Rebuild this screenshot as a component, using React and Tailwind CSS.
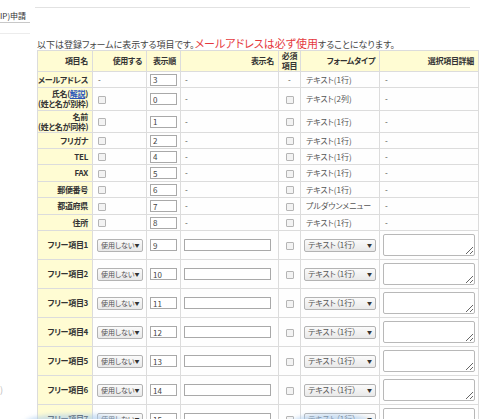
import React from 'react';

const font = "font-['Noto_Sans_CJK_JP','Noto_Sans',sans-serif] [font-feature-settings:'palt']";

const fixedRows = [
	{ label: 'メールアドレス', use: false, order: '3', req: false, type: 'テキスト(1行)', h: 'h-[16px]' },
	{
		label: (
			<>
				氏名(<span className="text-[#2a55b8] underline">解説</span>)
				<br />
				(姓と名が別枠)
			</>
		),
		use: true,
		order: '0',
		req: true,
		type: 'テキスト(2列)',
		h: 'h-[23px]'
	},
	{
		label: (
			<>
				名前
				<br />
				(姓と名が同枠)
			</>
		),
		use: true,
		order: '1',
		req: true,
		type: 'テキスト(1行)',
		h: 'h-[22px]'
	},
	{ label: 'フリガナ', use: true, order: '2', req: true, type: 'テキスト(1行)', h: 'h-[16px]' },
	{ label: 'TEL', use: true, order: '4', req: true, type: 'テキスト(1行)', h: 'h-[16px]' },
	{ label: 'FAX', use: true, order: '5', req: true, type: 'テキスト(1行)', h: 'h-[17px]' },
	{ label: '郵便番号', use: true, order: '6', req: true, type: 'テキスト(1行)', h: 'h-[16px]' },
	{ label: '都道府県', use: true, order: '7', req: true, type: 'プルダウンメニュー', h: 'h-[17px]' },
	{ label: '住所', use: true, order: '8', req: true, type: 'テキスト(1行)', h: 'h-[16px]' }
];

const freeRows = [1, 2, 3, 4, 5, 6, 7, 8];

const Check = () => (
	<span className="inline-block w-[8px] h-[8px] border border-[#b5b5b5] bg-[#f3f3f3] rounded-[1px] align-middle" />
);

const OrderInput = ({ value }) => (
	<input
		readOnly
		value={value}
		className="block w-[27px] h-[12px] border border-[#a9a9a9] bg-white px-[2px] text-[8px] leading-[10px] text-[#444] outline-none"
	/>
);

const FakeSelect = ({ text, w, size }) => (
	<div
		className={`${w} ${size} h-[13px] flex items-center justify-between border border-[#b3b3b3] rounded-[2px] bg-gradient-to-b from-[#fafafa] to-[#e9e9e9] px-[3px] text-[#555] whitespace-nowrap`}
	>
		<span>{text}</span>
		<span className="text-[5px] text-[#333]">▼</span>
	</div>
);

const td = 'border border-[#dcdcdc] bg-[#fefefe] align-middle whitespace-nowrap p-0';
const th =
	'border border-[#dcdcdc] bg-[#fffcd3] align-middle text-right pr-[4px] pl-0 py-0 font-bold text-[#333] whitespace-nowrap tracking-[-0.3px]';

export default function App() {
	return (
		<div className={`relative w-[484px] h-[419px] overflow-hidden bg-white text-[9px] text-[#444] ${font}`}>
			<div className="flex">
				<div className="w-[31px] shrink-0 pt-[10px]">
					<div className="h-[11px] leading-[11px] text-[8px] text-[#333] whitespace-nowrap">IP)申請</div>
					<div className="mt-[1px] w-[30px] border-t border-[#c8c8c8]" />
					<div className="mt-[10px] w-[30px] border-t border-[#ececec]" />
				</div>
				<div className="flex-1 pl-[6px]">
					<div className="mt-[7px] w-[435px] -ml-[2px] border-t border-[#e2e2e2]" />
					<p className="mt-[29px] h-[13px] leading-[13px] whitespace-nowrap text-[#444]">
						以下は登録フォームに表示する項目です。
						<span className="text-[11px] text-[#e5393e]">メールアドレスは必ず使用</span>
						することになります。
					</p>
					<table className="table-fixed border-collapse w-[441px] text-[8px]">
						<colgroup>
							<col className="w-[55px]" />
							<col className="w-[54px]" />
							<col className="w-[34px]" />
							<col className="w-[98px]" />
							<col className="w-[22px]" />
							<col className="w-[79px]" />
							<col className="w-[99px]" />
						</colgroup>
						<thead>
							<tr className="h-[20px]">
								<th className={th}>項目名</th>
								<th className={th}>使用する</th>
								<th className={th}>表示順</th>
								<th className={th}>表示名</th>
								<th className={`${th} !text-center !pr-0 leading-[10px]`}>
									必須
									<br />
									項目
								</th>
								<th className={th}>フォームタイプ</th>
								<th className={th}>選択項目詳細</th>
							</tr>
						</thead>
						<tbody>
							{fixedRows.map((r, i) => (
								<tr key={i} className={r.h}>
									<th className={`${th} leading-[10px]`}>{r.label}</th>
									<td className={`${td} pl-[5px]`}>{r.use ? <Check /> : '-'}</td>
									<td className={`${td} pl-[3px]`}>
										<OrderInput value={r.order} />
									</td>
									<td className={`${td} pl-[4px]`}>-</td>
									<td className={`${td} text-center`}>{r.req ? <Check /> : '-'}</td>
									<td className={`${td} pl-[5px] text-[#555]`}>{r.type}</td>
									<td className={`${td} pl-[5px]`}>-</td>
								</tr>
							))}
							{freeRows.map((n) => (
								<tr key={n} className="h-[29px]">
									<th className={th}>フリー項目{n}</th>
									<td className={`${td} pl-[4px]`}>
										<FakeSelect text="使用しない" w="w-[46px]" size="text-[7px]" />
									</td>
									<td className={`${td} pl-[3px]`}>
										<OrderInput value={String(n + 8)} />
									</td>
									<td className={`${td} pl-[3px]`}>
										<input
											readOnly
											className="block w-[87px] h-[12px] border border-[#a9a9a9] bg-white outline-none"
										/>
									</td>
									<td className={`${td} text-center`}>
										<Check />
									</td>
									<td className={`${td} pl-[3px]`}>
										<FakeSelect text="テキスト（1行）" w="w-[72px]" size="text-[8px]" />
									</td>
									<td className={`${td} pl-[3px]`}>
										<textarea
											readOnly
											className="block w-[92px] h-[22px] border border-[#b8b8b8] rounded-[2px] bg-white outline-none"
										/>
									</td>
								</tr>
							))}
						</tbody>
					</table>
				</div>
			</div>
			<span className="absolute left-0 top-[383px] text-[9px] text-[#bbb]">)</span>
			<div className="absolute left-[25px] top-[414px] w-[100px] h-[16px] rounded-[50%] bg-[#a9cbee] opacity-60 blur-[2px]" />
			<div className="absolute left-[292px] top-[414px] w-[78px] h-[16px] rounded-[50%] bg-[#a9cbee] opacity-60 blur-[2px]" />
		</div>
	);
}
